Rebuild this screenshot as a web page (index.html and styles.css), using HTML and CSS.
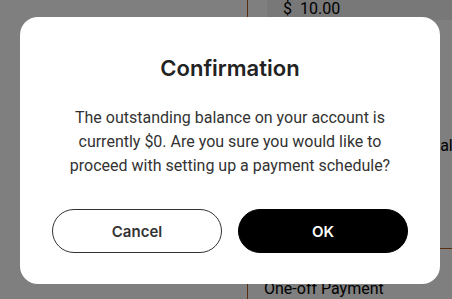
FILE: index.html
```html
<!DOCTYPE html>
<html>
<head>
<meta charset="utf-8">
<link rel="stylesheet" href="styles.css">
</head>
<body>
<div class="page">
  <div class="left-col"></div>
  <div class="right-col">
    <div class="amount-row"><div class="amount-cell">$&nbsp;&nbsp;10.00</div></div>
    <div class="mid-row"><span class="cut-text">Total</span></div>
    <div class="rule-row"></div>
    <div class="pay-row">One-off Payment</div>
  </div>
</div>
<div class="overlay">
  <div class="modal">
    <h2 class="modal-title">Confirmation</h2>
    <p class="modal-text">The outstanding balance on your account is currently $0. Are you sure you would like to proceed with setting up a payment schedule?</p>
    <div class="modal-actions">
      <button class="btn btn-cancel">Cancel</button>
      <button class="btn btn-ok">OK</button>
    </div>
  </div>
</div>
</body>
</html>
```

FILE: styles.css
```css
html, body {
  margin: 0;
  padding: 0;
  width: 452px;
  height: 299px;
  overflow: hidden;
  background: #ffffff;
  font-family: Roboto, "Liberation Sans", sans-serif;
}

.page {
  display: flex;
  width: 452px;
  height: 299px;
}

.left-col {
  width: 247px;
  border-right: 1px solid #b35a1a;
  flex: none;
}

.right-col {
  flex: 1;
  display: flex;
  flex-direction: column;
  min-width: 0;
}

.amount-row {
  height: 20px;
  padding-left: 19px;
}

.amount-cell {
  background: #f0f0f0;
  height: 20px;
  padding-left: 16px;
  font-size: 16px;
  line-height: 17px;
  color: #000;
}

.mid-row {
  height: 229px;
  padding-left: 169px;
  padding-top: 116px;
  box-sizing: border-box;
  font-size: 16px;
  color: #000;
  white-space: nowrap;
  overflow: hidden;
}

.rule-row {
  height: 1px;
  background: #b35a1a;
}

.pay-row {
  padding-left: 16px;
  padding-top: 30px;
  font-size: 16px;
  line-height: 20px;
  color: #000;
  white-space: nowrap;
}

.overlay {
  position: fixed;
  inset: 0;
  background: rgba(0, 0, 0, 0.5);
  padding: 17px 0 0 20px;
  box-sizing: border-box;
}

.modal {
  width: 420px;
  height: 267px;
  background: #fff;
  border-radius: 18px;
  box-sizing: border-box;
  padding: 37px 32px 0;
  display: flex;
  flex-direction: column;
  align-items: center;
}

.modal-title {
  margin: 0;
  font-family: Inter, "Liberation Sans", sans-serif;
  font-weight: 600;
  font-size: 22px;
  line-height: 28px;
  color: #222;
}

.modal-text {
  margin: 24px 0 0;
  text-align: center;
  font-size: 16px;
  line-height: 24px;
  color: #333;
}

.modal-actions {
  margin-top: 31px;
  display: flex;
  gap: 16px;
  width: 100%;
}

.btn {
  flex: 1;
  height: 44px;
  border-radius: 22px;
  font-family: Inter, "Liberation Sans", sans-serif;
  font-weight: 600;
  font-size: 15px;
  cursor: pointer;
}

.btn-cancel {
  background: #fff;
  border: 1px solid #333;
  color: #333;
}

.btn-ok {
  background: #000;
  border: 1px solid #000;
  color: #fff;
}
```
